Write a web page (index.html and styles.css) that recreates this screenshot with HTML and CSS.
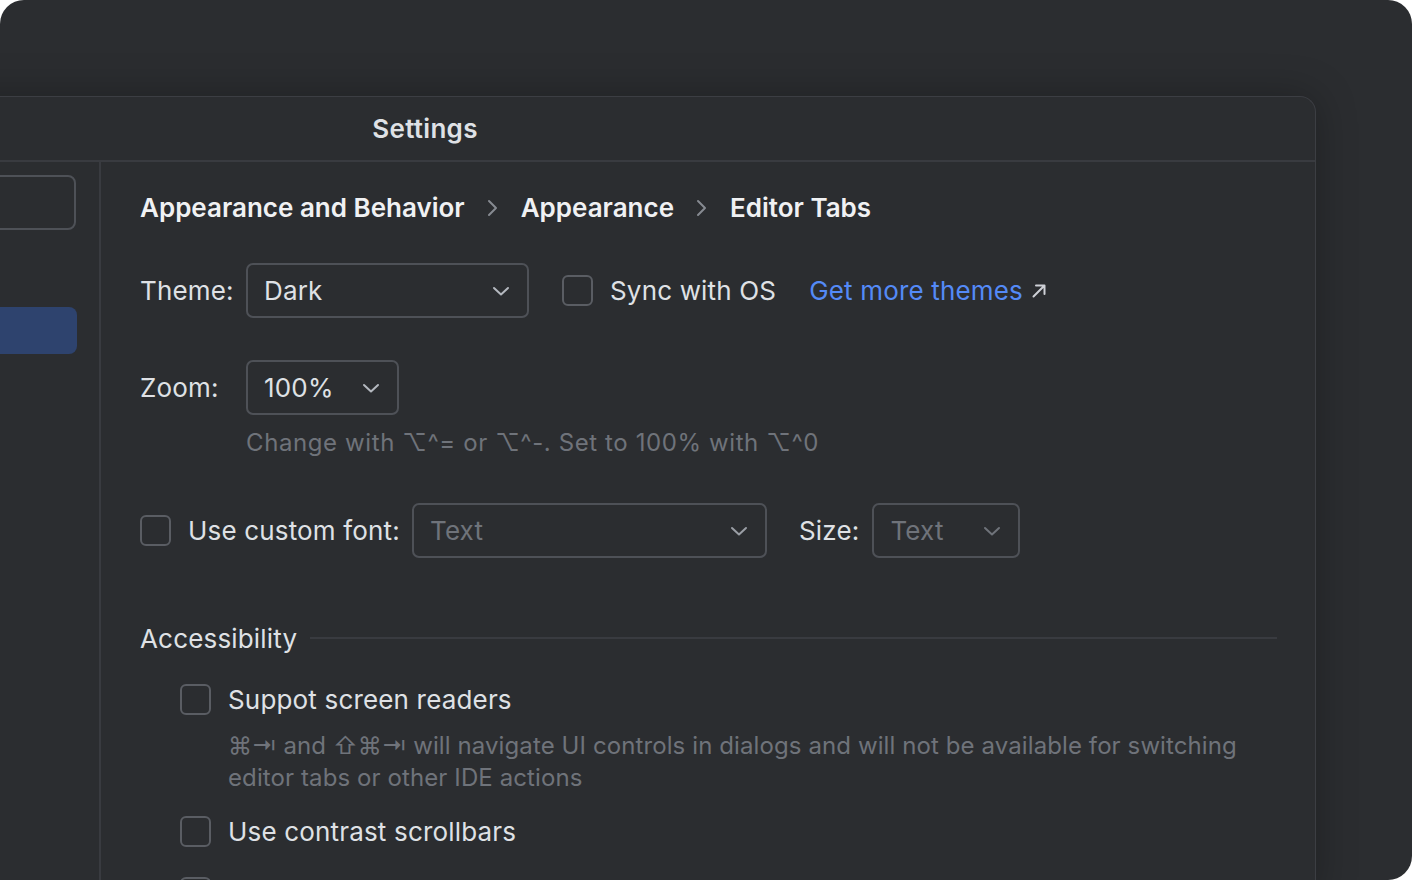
FILE: index.html
```html
<!DOCTYPE html>
<html>
<head>
<meta charset="utf-8">
<link rel="stylesheet" href="styles.css">
</head>
<body>
<div class="frame">
  <div class="dialog">
    <div class="titlebar"><span class="title">Settings</span></div>
    <div class="body">
      <aside class="sidebar">
        <div class="search"></div>
        <div class="nav-selected"></div>
      </aside>
      <main class="content">
        <div class="crumbs">
          <span>Appearance and Behavior</span>
          <svg class="crumb-chev" width="12" height="18" viewBox="0 0 12 18"><path d="M2 2 L9 9 L2 16" fill="none" stroke="#868a91" stroke-width="2" stroke-linecap="round" stroke-linejoin="round"/></svg>
          <span>Appearance</span>
          <svg class="crumb-chev" width="12" height="18" viewBox="0 0 12 18"><path d="M2 2 L9 9 L2 16" fill="none" stroke="#868a91" stroke-width="2" stroke-linecap="round" stroke-linejoin="round"/></svg>
          <span>Editor Tabs</span>
        </div>

        <div class="row row-theme">
          <span class="label">Theme:</span>
          <div class="combo combo-theme">
            <span class="value">Dark</span>
            <svg class="chev" width="18" height="10" viewBox="0 0 18 10"><path d="M2 2 L9 8.5 L16 2" fill="none" stroke="#b4b8bf" stroke-width="2" stroke-linecap="round" stroke-linejoin="round"/></svg>
          </div>
          <span class="check"></span>
          <span class="text">Sync with OS</span>
          <span class="link">Get more themes
            <svg class="ext" width="16" height="16" viewBox="0 0 16 16"><path d="M2.5 13.5 L13 3 M5 2.5 H13.5 V11" fill="none" stroke="#ced0d6" stroke-width="2" stroke-linecap="round" stroke-linejoin="round"/></svg>
          </span>
        </div>

        <div class="row row-zoom">
          <span class="label">Zoom:</span>
          <div class="combo combo-zoom">
            <span class="value">100%</span>
            <svg class="chev" width="18" height="10" viewBox="0 0 18 10"><path d="M2 2 L9 8.5 L16 2" fill="none" stroke="#b4b8bf" stroke-width="2" stroke-linecap="round" stroke-linejoin="round"/></svg>
          </div>
        </div>
        <div class="hint hint-zoom">Change with ⌥^= or ⌥^-. Set to 100% with ⌥^0</div>

        <div class="row row-font">
          <span class="check"></span>
          <span class="text">Use custom font:</span>
          <div class="combo combo-font">
            <span class="value placeholder">Text</span>
            <svg class="chev" width="18" height="10" viewBox="0 0 18 10"><path d="M2 2 L9 8.5 L16 2" fill="none" stroke="#9a9ea5" stroke-width="2" stroke-linecap="round" stroke-linejoin="round"/></svg>
          </div>
          <span class="text size-label">Size:</span>
          <div class="combo combo-size">
            <span class="value placeholder">Text</span>
            <svg class="chev" width="18" height="10" viewBox="0 0 18 10"><path d="M2 2 L9 8.5 L16 2" fill="none" stroke="#6f737a" stroke-width="2" stroke-linecap="round" stroke-linejoin="round"/></svg>
          </div>
        </div>

        <div class="section">
          <span class="section-title">Accessibility</span>
          <span class="section-line"></span>
        </div>

        <div class="option">
          <span class="check"></span>
          <span class="text">Suppot screen readers</span>
        </div>
        <div class="hint option-hint">⌘⇥ and ⇧⌘⇥ will navigate UI controls in dialogs and will not be available for switching editor tabs or other IDE actions</div>

        <div class="option option-2">
          <span class="check"></span>
          <span class="text">Use contrast scrollbars</span>
        </div>
        <div class="option option-3">
          <span class="check"></span>
        </div>
      </main>
    </div>
  </div>
</div>
</body>
</html>
```

FILE: styles.css
```css
* { box-sizing: border-box; }
html, body {
  margin: 0;
  padding: 0;
  background: #ffffff;
}
body {
  font-family: Inter, "Noto Sans", "DejaVu Sans", sans-serif;
  color: #dfe1e5;
}
.frame {
  width: 1412px;
  height: 880px;
  background: #2b2d30;
  border-radius: 24px 24px 24px 0;
  overflow: hidden;
  padding-top: 96px;
}
.dialog {
  width: 1782px;
  margin-left: -466px;
  height: 800px;
  background: #2b2d30;
  border: 1px solid #3c3e43;
  border-bottom: none;
  border-radius: 16px 16px 0 0;
  box-shadow: 0 0 40px rgba(0, 0, 0, 0.28);
  display: flex;
  flex-direction: column;
}
.titlebar {
  flex: none;
  height: 65px;
  border-bottom: 2px solid #393b40;
  display: flex;
  align-items: center;
  justify-content: center;
}
.title {
  font-size: 26px;
  font-weight: 600;
  color: #dfe1e5;
  margin-top: -1px;
  letter-spacing: 0.3px;
}
.body {
  flex: 1;
  display: flex;
  min-height: 0;
}
.sidebar {
  flex: none;
  width: 566px;
  border-right: 2px solid #393b40;
  padding: 13px 23px 0 0;
  display: flex;
  flex-direction: column;
}
.search {
  height: 55px;
  border: 2px solid #4e5157;
  border-radius: 8px;
}
.nav-selected {
  margin-top: 77px;
  height: 47px;
  background: #2e436e;
  border-radius: 8px;
  margin-right: -1px;
}
.content {
  flex: 1;
  padding: 28px 38px 0 39px;
  display: flex;
  flex-direction: column;
  font-size: 26px;
  letter-spacing: 0.17px;
}
.crumbs {
  flex: none;
  height: 34px;
  display: flex;
  align-items: center;
  gap: 22px;
  font-weight: 600;
  color: #f0f1f3;
  letter-spacing: 0;
}
.crumb-chev { margin-top: 1px; }
.row {
  flex: none;
  display: flex;
  align-items: center;
}
.row-theme { margin-top: 39px; }
.row-zoom { margin-top: 42px; }
.label {
  width: 106px;
  flex: none;
}
.combo {
  flex: none;
  height: 55px;
  border: 2px solid #4e5157;
  border-radius: 7px;
  display: flex;
  align-items: center;
  justify-content: space-between;
  padding: 0 17px 0 16px;
}
.combo .value { color: #dfe1e5; }
.combo .placeholder { color: #6f737a; }
.combo-theme { width: 283px; }
.combo-zoom { width: 153px; }
.combo-font { width: 355px; margin-left: 12px; }
.combo-size { width: 148px; margin-left: 13px; }
.check {
  width: 31px;
  height: 31px;
  border: 2px solid #5a5d63;
  border-radius: 6px;
  flex: none;
}
.row-theme .check { margin-left: 33px; }
.row-theme .text { margin-left: 17px; }
.link {
  margin-left: 33px;
  color: #548af7;
  display: flex;
  align-items: center;
  gap: 8px;
}
.ext { margin-top: 1px; }
.hint {
  flex: none;
  color: #6f737a;
  font-size: 24px;
  line-height: 32px;
  letter-spacing: 0.1px;
}
.hint-zoom {
  margin-top: 12px;
  margin-left: 106px;
  letter-spacing: 0.6px;
}
.row-font { margin-top: 44px; }
.row-font .text { margin-left: 17px; }
.size-label { margin-left: 32px !important; }
.section {
  flex: none;
  margin-top: 63px;
  height: 34px;
  display: flex;
  align-items: center;
  gap: 13px;
}
.section-title { color: #dfe1e5; }
.section-line {
  flex: 1;
  height: 2px;
  background: #393b40;
}
.option {
  flex: none;
  margin-top: 27px;
  margin-left: 40px;
  height: 34px;
  display: flex;
  align-items: center;
  gap: 17px;
}
.option-hint {
  margin-top: 14px;
  margin-left: 88px;
  max-width: 1030px;
}
.option-2 { margin-top: 20px; }
.option-3 { margin-top: 28px; align-items: flex-start; padding-top: 1px; }
```
